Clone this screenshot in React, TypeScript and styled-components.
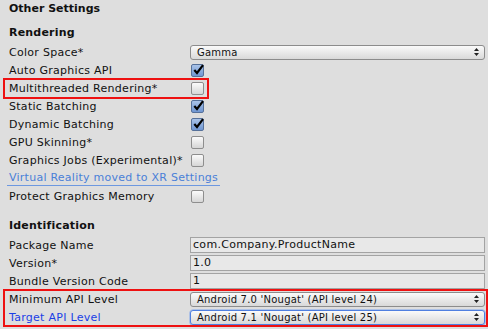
import React from "react";
import styled, { createGlobalStyle } from "styled-components";

const Global = createGlobalStyle`
  html, body { margin: 0; padding: 0; background: #dedede; }
  body { font-family: "DejaVu Sans", "Verdana", sans-serif; color: #111; }
`;

const Panel = styled.div`
  width: 488px;
  height: 329px;
  background: #dedede;
  padding: 0 3px 0 9px;
  box-sizing: border-box;
  display: flex;
  flex-direction: column;
  overflow: hidden;
`;

const Title = styled.div`
  height: 18px;
  line-height: 18px;
  font-size: 11px;
  font-weight: bold;
`;

const SectionHeader = styled.div<{ $mt: number }>`
  margin-top: ${(p) => p.$mt}px;
  height: 20px;
  line-height: 20px;
  font-size: 11px;
  font-weight: bold;
  letter-spacing: 0.2px;
`;

const Row = styled.div`
  position: relative;
  height: 18px;
  display: flex;
  align-items: center;
`;

const Label = styled.div<{ $color?: string }>`
  width: 181px;
  flex: none;
  font-size: 11px;
  letter-spacing: 0.28px;
  color: ${(p) => p.$color || "#111"};
  white-space: nowrap;
`;

const Field = styled.div`
  flex: 1;
  display: flex;
  align-items: center;
`;

const Box = styled.div<{ $checked: boolean }>`
  width: 11px;
  height: 11px;
  margin-left: 1px;
  border: 1px solid ${(p) => (p.$checked ? "#56719a" : "#8e8e8e")};
  border-radius: 2px;
  background: ${(p) =>
    p.$checked
      ? "linear-gradient(#a9c3e8, #6f96d2)"
      : "linear-gradient(#fbfbfb, #d6d6d6)"};
  position: relative;
  svg { position: absolute; left: 0px; top: -2px; }
`;

const PopupBox = styled.div<{ $focus?: boolean }>`
  flex: 1;
  height: 13px;
  border: 1px solid ${(p) => (p.$focus ? "#4f7fe0" : "#8c8c8c")};
  border-radius: 3px;
  background: linear-gradient(#fafafa, #e6e6e6 60%, #d9d9d9);
  display: flex;
  align-items: center;
  justify-content: space-between;
  padding: 0 5px 0 6px;
  font-size: 10px;
  letter-spacing: 0.22px;
  color: #111;
  box-shadow: ${(p) => (p.$focus ? "0 0 0 0.5px #7da3ec" : "none")};
`;

const TextBox = styled.div`
  flex: 1;
  height: 14px;
  border: 1px solid #a3a3a3;
  background: #e8e8e8;
  font-size: 11px;
  letter-spacing: 0.3px;
  line-height: 14px;
  padding-left: 2px;
  color: #111;
`;

const LinkRow = styled.div`
  height: 18px;
  display: flex;
  align-items: center;
  position: relative;
`;

const Link = styled.span`
  font-size: 11px;
  letter-spacing: 0.25px;
  color: #4a80d8;
  padding: 0 2px;
  margin-left: -2px;
  line-height: 14px;
  border-bottom: 1px solid #6d98e0;
`;

const Highlight = styled.div<{ $l: number; $t: number; $w: number; $h: number }>`
  position: absolute;
  left: ${(p) => p.$l}px;
  top: ${(p) => p.$t}px;
  width: ${(p) => p.$w}px;
  height: ${(p) => p.$h}px;
  border: 2px solid #ee1111;
  box-sizing: border-box;
  pointer-events: none;
`;

const Group = styled.div`
  position: relative;
  display: flex;
  flex-direction: column;
`;

const Check = ({ on }: { on: boolean }) => (
  <Box $checked={on}>
    {on && (
      <svg width="13" height="13" viewBox="0 0 13 13">
        <path d="M2.3 7 L5 10 L11 2.2" fill="none" stroke="#000" strokeWidth="2.2" />
      </svg>
    )}
  </Box>
);

const Arrows = () => (
  <svg width="5" height="8" viewBox="0 0 5 8">
    <path d="M2.5 0 L5 3 L0 3 Z M0 5 L5 5 L2.5 8 Z" fill="#222" />
  </svg>
);

const Popup = ({ text, focus }: { text: string; focus?: boolean }) => (
  <PopupBox $focus={focus}>
    <span>{text}</span>
    <Arrows />
  </PopupBox>
);

const CheckRow = ({ label, on }: { label: string; on: boolean }) => (
  <Row>
    <Label>{label}</Label>
    <Field>
      <Check on={on} />
    </Field>
  </Row>
);

export default function App() {
  return (
    <>
      <Global />
      <Panel>
        <Title>Other Settings</Title>
        <SectionHeader $mt={5}>Rendering</SectionHeader>
        <Row>
          <Label>Color Space*</Label>
          <Field>
            <Popup text="Gamma" />
          </Field>
        </Row>
        <CheckRow label="Auto Graphics API" on />
        <Row>
          <Label>Multithreaded Rendering*</Label>
          <Field>
            <Check on={false} />
          </Field>
          <Highlight $l={-6} $t={-1} $w={206} $h={21} />
        </Row>
        <CheckRow label="Static Batching" on />
        <CheckRow label="Dynamic Batching" on />
        <CheckRow label="GPU Skinning*" on={false} />
        <CheckRow label="Graphics Jobs (Experimental)*" on={false} />
        <LinkRow>
          <Link>Virtual Reality moved to XR Settings</Link>
        </LinkRow>
        <CheckRow label="Protect Graphics Memory" on={false} />
        <SectionHeader $mt={11}>Identification</SectionHeader>
        <Row>
          <Label>Package Name</Label>
          <Field>
            <TextBox>com.Company.ProductName</TextBox>
          </Field>
        </Row>
        <Row>
          <Label>Version*</Label>
          <Field>
            <TextBox>1.0</TextBox>
          </Field>
        </Row>
        <Row>
          <Label>Bundle Version Code</Label>
          <Field>
            <TextBox>1</TextBox>
          </Field>
        </Row>
        <Group>
          <Row>
            <Label>Minimum API Level</Label>
            <Field>
              <Popup text="Android 7.0 'Nougat' (API level 24)" />
            </Field>
          </Row>
          <Row>
            <Label $color="#1a3fe6">Target API Level</Label>
            <Field>
              <Popup text="Android 7.1 'Nougat' (API level 25)" focus />
            </Field>
          </Row>
          <Highlight $l={-6} $t={-1} $w={485} $h={38} />
        </Group>
      </Panel>
    </>
  );
}
